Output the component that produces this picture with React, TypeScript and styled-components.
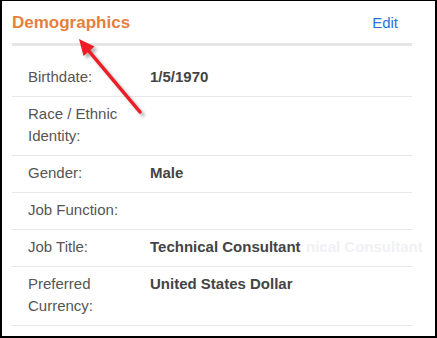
import React from "react";
import styled, { createGlobalStyle } from "styled-components";

const GlobalStyle = createGlobalStyle`
  html, body { margin: 0; padding: 0; background: #fff; }
  body { font-family: "Liberation Sans", Arial, sans-serif; }
`;

const Frame = styled.div`
  position: relative;
  width: 437px;
  height: 338px;
  box-sizing: border-box;
  border-style: solid;
  border-color: #000;
  border-width: 1px 2px 2px 2px;
  background: #fff;
  overflow: hidden;
`;

const Card = styled.section`
  margin: 11px 23px 0 10px;
`;

const Header = styled.div`
  display: flex;
  justify-content: space-between;
  align-items: baseline;
  padding-bottom: 9px;
  border-bottom: 3px solid #e6e6e6;
`;

const Title = styled.h2`
  margin: 0;
  font-size: 17px;
  line-height: 22px;
  font-weight: bold;
  color: #e57f3c;
`;

const EditLink = styled.a`
  font-size: 15px;
  line-height: 22px;
  color: #2b72d6;
  text-decoration: none;
  margin-right: 14px;
  cursor: pointer;
`;

const Rows = styled.div`
  margin-top: 14px;
`;

const Row = styled.div`
  display: grid;
  grid-template-columns: 138px 1fr;
  padding: 6px 0 8px;
  border-bottom: 1px solid #e8e8e8;
  font-size: 15px;
  line-height: 22px;
`;

const Label = styled.div`
  padding: 0 16px;
  color: #555;
`;

const Value = styled.div`
  font-weight: bold;
  color: #444;
`;

const ArrowLayer = styled.svg`
  position: absolute;
  left: 0;
  top: 0;
  pointer-events: none;
`;

const Ghost = styled.div`
  position: absolute;
  left: 304px;
  top: 235px;
  white-space: nowrap;
  font-size: 15px;
  line-height: 22px;
  font-weight: bold;
  color: #f0f1f4;
  pointer-events: none;
`;

const rows: { label: string; value?: string }[] = [
  { label: "Birthdate:", value: "1/5/1970" },
  { label: "Race / Ethnic Identity:" },
  { label: "Gender:", value: "Male" },
  { label: "Job Function:" },
  { label: "Job Title:", value: "Technical Consultant" },
  { label: "Preferred Currency:", value: "United States Dollar" },
];

export default function App() {
  return (
    <>
      <GlobalStyle />
      <Frame>
        <Card>
          <Header>
            <Title>Demographics</Title>
            <EditLink>Edit</EditLink>
          </Header>
          <Rows>
            {rows.map((r) => (
              <Row key={r.label}>
                <Label>{r.label}</Label>
                <Value>{r.value ?? ""}</Value>
              </Row>
            ))}
          </Rows>
        </Card>
        <Ghost aria-hidden="true">nical Consultant</Ghost>
        <ArrowLayer width="437" height="338" viewBox="2 1 437 338">
          <defs>
            <filter id="shadow" x="-50%" y="-50%" width="200%" height="200%">
              <feGaussianBlur stdDeviation="1.6" />
            </filter>
          </defs>
          <g transform="translate(3 3)" filter="url(#shadow)" opacity="0.45">
            <line x1="140" y1="112" x2="88" y2="50" stroke="#555" strokeWidth="3.5" strokeLinecap="round" />
            <polygon points="79,39 94.5,46.5 83.5,56" fill="#555" />
          </g>
          <line x1="140" y1="112" x2="88" y2="50" stroke="#ee1c25" strokeWidth="3.5" strokeLinecap="round" />
          <polygon points="79,39 94.5,46.5 83.5,56" fill="#ee1c25" />
        </ArrowLayer>
      </Frame>
    </>
  );
}
